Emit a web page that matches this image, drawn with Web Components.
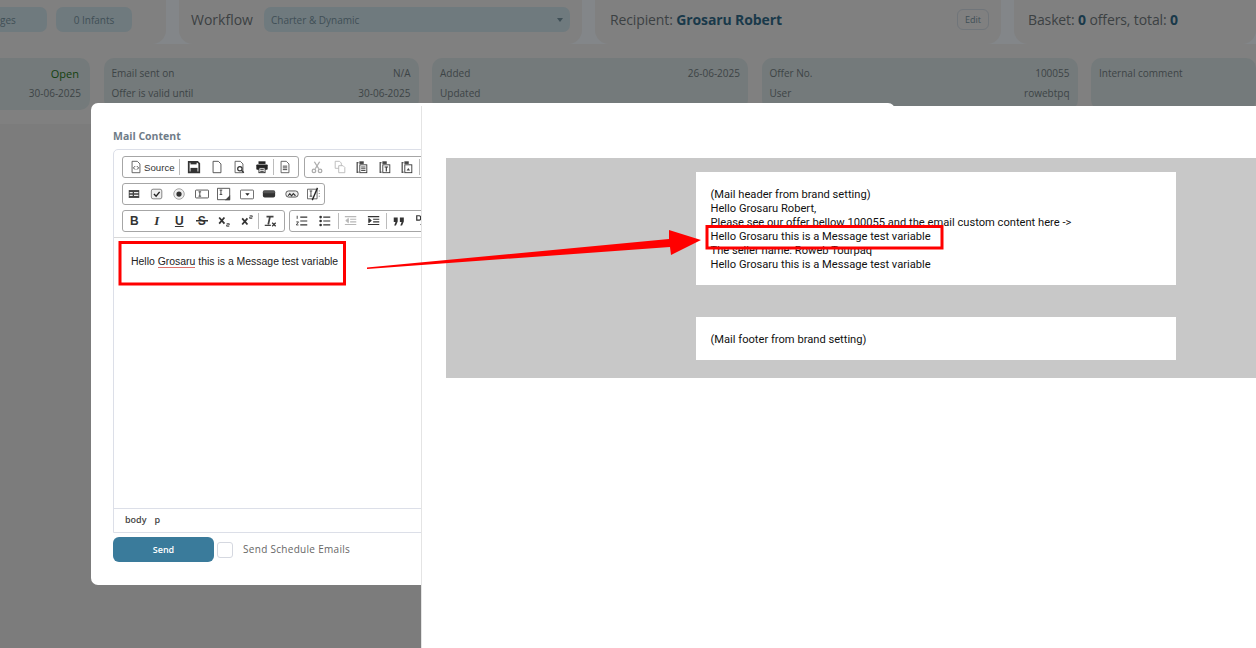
<!DOCTYPE html>
<html>
<head>
<meta charset="utf-8">
<title>Mail Content</title>
<style>
    html, body { margin: 0; height: 100%; overflow: hidden; background: #7c7c7c; }
</style>
</head>
<body>

<offer-page></offer-page>

<script>
const ICONS = {
    source: '<path d="M3.5 1.5h6l3 3v10h-9z" fill="#fff" stroke="#555"/><path d="M7 7l-2 2 2 2M9 7l2 2-2 2" fill="none" stroke="#333"/>',
    save: '<path d="M2 2h10l2 2v10H2z" fill="none" stroke="#333" stroke-width="2"/><rect x="4" y="9" width="8" height="5" fill="#333"/><rect x="4" y="2" width="7" height="3" fill="#333"/>',
    newpage: '<path d="M3.5 1.5h6l3 3v10h-9z" fill="#fff" stroke="#444"/>',
    preview: '<path d="M3.5 1.5h6l3 3v10h-9z" fill="#fff" stroke="#555"/><circle cx="9" cy="10" r="2.5" fill="#fff" stroke="#333" stroke-width="1.4"/><path d="M11 12l2.5 2.5" stroke="#333" stroke-width="1.5"/>',
    print: '<rect x="4" y="1.5" width="8" height="3" fill="#222"/><rect x="1.5" y="5" width="13" height="6" rx="1" fill="#222"/><rect x="4.5" y="9" width="7" height="5.5" fill="#fff" stroke="#222"/><path d="M6 11h4M6 13h4" stroke="#222"/>',
    template: '<path d="M3.5 1.5h6l3 3v10h-9z" fill="#fff" stroke="#555"/><path d="M5.5 7h5M5.5 9h5M5.5 11h5" stroke="#333"/>',
    cut: '<g opacity=".4" fill="none" stroke="#333" stroke-width="1.5"><path d="M5 2l5 8M11 2L6 10"/><circle cx="4.5" cy="12.5" r="2"/><circle cx="11.5" cy="12.5" r="2"/></g>',
    copy: '<g opacity=".35" fill="#fff" stroke="#333"><path d="M2.5 1.5h5l2 2v6h-7z"/><path d="M6.5 6.5h5l2 2v6h-7z"/></g>',
    paste: '<path d="M4 3H2.500v11H4" fill="none" stroke="#555" stroke-width="1.500"/><rect x="5" y="1.500" width="5" height="3" fill="#444"/><rect x="5.500" y="5.500" width="8" height="9" fill="#fff" stroke="#333"/><path d="M7 8h5M7 10h5M7 12h5" stroke="#333"/>',
    pastetext: '<path d="M4 3H2.500v11H4" fill="none" stroke="#555" stroke-width="1.500"/><rect x="5" y="1.500" width="5" height="3" fill="#444"/><rect x="5.500" y="5.500" width="8" height="9" fill="#fff" stroke="#333"/><path d="M7.500 8h4M9.500 8v5" stroke="#333" stroke-width="1.300"/>',
    pasteword: '<path d="M4 3H2.500v11H4" fill="none" stroke="#555" stroke-width="1.500"/><rect x="5" y="1.500" width="5" height="3" fill="#444"/><rect x="5.500" y="5.500" width="8" height="9" fill="#fff" stroke="#333"/><path d="M7.500 12l2-3 2 3z" fill="#444"/>',
    form: '<rect x="2" y="3.500" width="12" height="9" fill="#444"/><path d="M3 6.500h3.500M8 6.500h5M3 9.500h3.500M8 9.500h5" stroke="#eee" stroke-width="1.300"/>',
    checkbox: '<rect x="1.500" y="2.500" width="12" height="11" rx="2" fill="#eee" stroke="#777"/><path d="M4.500 8l2.500 2.500 4-5" fill="none" stroke="#222" stroke-width="1.600"/>',
    radio: '<circle cx="8" cy="8" r="6" fill="#eee" stroke="#999"/><circle cx="8" cy="8" r="3" fill="#333"/>',
    textfield: '<rect x=".5" y="3.500" width="15" height="9" rx="1" fill="#fff" stroke="#444"/><path d="M4 5.500h3M4 10.500h3M5.500 5.500v5" stroke="#333"/>',
    textarea: '<path d="M.5 1.500h14v13H.5z" fill="#fff" stroke="#444"/><path d="M3 3.500h3M3 8.500h3M4.500 3.500v5" stroke="#333"/><path d="M15 9v6H9z" fill="#444"/>',
    select: '<rect x=".5" y="3.500" width="15" height="10" rx="1" fill="#fff" stroke="#555"/><path d="M6 7h5l-2.500 3z" fill="#222"/>',
    button: '<rect x="1" y="4" width="14" height="8" rx="2" fill="#333"/><rect x="1" y="4" width="14" height="3" rx="1.500" fill="#555"/>',
    imagebutton: '<rect x="1" y="4.500" width="14" height="7" rx="3" fill="#eee" stroke="#444"/><path d="M3.500 10l2-2.500 2 2.500 2-2.500 2.500 2.500" fill="none" stroke="#333" stroke-width="1.300"/>',
    hidden: '<path d="M.5 2.500h11v11H.5z" fill="#fff" stroke="#555"/><path d="M3 4.500h3M3 10.500h3M4.500 4.500v6" stroke="#333"/><path d="M12 1L6 15" stroke="#222" stroke-width="1.500"/><path d="M14 4v1M14 7v1M14 10v1" stroke="#555"/>',
    sub: '<path d="M2.500 4l6 7M8.500 4l-6 7" stroke="#333" stroke-width="2"/><path d="M11 11h3v1.500h-3V14h3" fill="none" stroke="#444"/>',
    sup: '<path d="M2.500 5l6 7M8.500 5l-6 7" stroke="#333" stroke-width="2"/><path d="M11 2h3v1.500h-3V5h3" fill="none" stroke="#444"/>',
    removeformat: '<path d="M4 3h8M8 3l-2 9" stroke="#444" stroke-width="2"/><path d="M2 13h7" stroke="#444" stroke-width="1.500"/><path d="M10.500 10l4 4M14.500 10l-4 4" stroke="#333" stroke-width="1.400"/>',
    numlist: '<path d="M6 3.500h8M6 8h8M6 12.500h8" stroke="#333" stroke-width="1.400"/><path d="M2.500 2v3.500M1.500 9h2.500l-2.500 3.500h2.500" fill="none" stroke="#333"/>',
    bullist: '<path d="M6 3.500h8M6 8h8M6 12.500h8" stroke="#333" stroke-width="1.400"/><circle cx="3" cy="3.500" r="1.500" fill="#333"/><circle cx="3" cy="8" r="1.500" fill="#333"/><circle cx="3" cy="12.500" r="1.500" fill="#333"/>',
    outdent: '<g opacity=".35" stroke="#333"><path d="M1 3h13M7 6h7M7 9h7M1 12h13" stroke-width="1.200"/><path d="M5 5L2 7.500 5 10z" fill="#333"/></g>',
    indent: '<g stroke="#333"><path d="M1 3h13M7 6h7M7 9h7M1 12h13" stroke-width="1.200"/><path d="M2 5l3 2.500L2 10z" fill="#333"/></g>',
    quote: '<path d="M2 4h4.500v4.500L4.500 13H2.500l1.500-4H2zM9 4h4.500v4.500L11.500 13H9.500l1.500-4H9z" fill="#333"/>',
    div: '<path d="M2 2h3c2 0 2 5 0 5H2zM10 9l-3 3 3 3" fill="none" stroke="#333" stroke-width="1.400"/>'
};

class OfferChip extends HTMLElement {
    constructor() {
        super();
        this.shadow = this.attachShadow({mode: 'open'});
        this.shadow.innerHTML = `
        <style>
            :host{
                display:flex;
                align-items:center;
                justify-content:center;
                height:25px;
                background:#6f7a7e;
                border-radius:7px;
                color:#3f4f56;
                font-size:10px;
            }
        </style>
        <slot></slot>`;
    }
}

class InfoCard extends HTMLElement {
    constructor() {
        super();
        this.shadow = this.attachShadow({mode: 'open'});
        this.shadow.innerHTML = `
        <style>
            :host{
                display:grid;
                grid-template-columns:1fr auto;
                grid-auto-rows:20px;
                align-items:center;
                align-content:start;
                box-sizing:border-box;
                height:52px;
                padding:5px 8px 0;
                background:#747a7b;
                border-radius:10px;
                color:#3d4446;
                font-size:10px;
            }
        </style>
        <slot></slot>`;
    }
}

class PageBackdrop extends HTMLElement {
    constructor() {
        super();
        this.shadow = this.attachShadow({mode: 'open'});
        this.shadow.innerHTML = `
        <style>
            :host{
                display:block;
                height:124px;
                background:#808080;
                font-family:"Open Sans", sans-serif;
                overflow:hidden;
            }
            .top{
                display:grid;
                grid-template-columns:166px 403px 406px 1fr;
                column-gap:13px;
                height:44px;
                background:#838689;
            }
            .part{
                display:flex;
                align-items:flex-start;
                background:#808080;
                border-radius:0 0 14px 14px;
                color:#3c4143;
                font-size:14px;
                min-width:0;
            }
            .first{ padding-top:7px; gap:9px; border-bottom-left-radius:0; }
            .first offer-chip:first-child{ width:47px; border-radius:0 7px 7px 0; justify-content:flex-start; }
            .first offer-chip:last-child{ width:76px; }
            .workflow{ padding:7px 0 0 12px; gap:11px; }
            .workflow .label{ line-height:25px; }
            .select{
                flex:0 0 306px;
                display:flex;
                align-items:center;
                justify-content:space-between;
                height:25px;
                box-sizing:border-box;
                padding:0 7px;
                background:#6f7a7e;
                border-radius:7px;
                color:#3f4f56;
                font-size:10px;
            }
            .caret{ border:3px solid transparent; border-top:4px solid #3f4f56; border-bottom:0; }
            .recipient{ padding:7px 12px 0 15px; justify-content:space-between; }
            .recipient span, .basket{ line-height:25px; letter-spacing:-.12px; }
            .part b{ color:#19394a; font-weight:700; }
            .edit{
                margin-top:2px;
                width:32px;
                height:21px;
                box-sizing:border-box;
                display:flex;
                align-items:center;
                justify-content:center;
                border:1px solid #70757a;
                border-radius:6px;
                font-size:9px;
                color:#3f4f56;
            }
            .basket{ padding:7px 0 0 14px; }
            .cards{
                display:grid;
                grid-template-columns:90px 315px 316px 316px 1fr;
                column-gap:13.500px;
                padding-top:14px;
            }
            .cards info-card:first-child{ border-radius:0 10px 10px 0; padding-right:9px; }
            .right{ text-align:right; }
            .open{ color:#13410f; font-size:11px; padding-right:2px; }
        </style>
        <div class="top">
            <div class="part first"><offer-chip>ges</offer-chip><offer-chip>0 Infants</offer-chip></div>
            <div class="part workflow">
                <span class="label">Workflow</span>
                <div class="select"><span>Charter &amp; Dynamic</span><i class="caret"></i></div>
            </div>
            <div class="part recipient">
                <span>Recipient: <b>Grosaru Robert</b></span>
                <div class="edit">Edit</div>
            </div>
            <div class="part basket">Basket:&nbsp;<b>0</b>&nbsp;offers, total:&nbsp;<b>0</b></div>
        </div>
        <div class="cards">
            <info-card>
                <span></span><span class="right open">Open</span>
                <span></span><span class="right">30-06-2025</span>
            </info-card>
            <info-card>
                <span>Email sent on</span><span class="right">N/A</span>
                <span>Offer is valid until</span><span class="right">30-06-2025</span>
            </info-card>
            <info-card>
                <span>Added</span><span class="right">26-06-2025</span>
                <span>Updated</span><span></span>
            </info-card>
            <info-card>
                <span>Offer No.</span><span class="right">100055</span>
                <span>User</span><span class="right">rowebtpq</span>
            </info-card>
            <info-card><span>Internal comment</span></info-card>
        </div>`;
    }
}

class ToolIcon extends HTMLElement {
    constructor() {
        super();
        this.shadow = this.attachShadow({mode: 'open'});
    }

    connectedCallback() {
        const name = this.getAttribute('name');
        this.shadow.innerHTML = `
        <style>
            :host{
                display:flex;
                align-items:center;
                justify-content:center;
                flex:0 0 22.5px;
                height:20px;
                font-family:"Liberation Sans", sans-serif;
                font-size:12px;
                font-weight:700;
                color:#333;
            }
            svg{ width:14px; height:14px; display:block; }
        </style>
        ${ICONS[name] ? `<svg viewBox="0 0 16 16">${ICONS[name]}</svg>` : '<slot></slot>'}`;
    }
}

class ToolGroup extends HTMLElement {
    constructor() {
        super();
        this.shadow = this.attachShadow({mode: 'open'});
        this.shadow.innerHTML = `
        <style>
            :host{
                display:flex;
                align-items:center;
                flex:none;
                box-sizing:border-box;
                height:22px;
                border:1px solid #a6a6a6;
                border-radius:3px;
                background:#fff;
            }
            ::slotted(.sep){ width:1px; height:16px; background:#bcbcbc; flex:none; }
            ::slotted(.source){
                display:flex;
                align-items:center;
                gap:1px;
                font:9.700px "Liberation Sans", sans-serif;
                color:#333;
                padding-left:6px;
                width:52px;
                flex:none;
                box-sizing:border-box;
            }
        </style>
        <slot></slot>`;
    }
}

class MailEditor extends HTMLElement {
    constructor() {
        super();
        this.shadow = this.attachShadow({mode: 'open'});
        this.shadow.innerHTML = `
        <style>
            :host{
                display:flex;
                flex-direction:column;
                width:500px;
                height:384px;
                box-sizing:border-box;
                border:1px solid #dcdfe8;
                border-radius:5px 0 0 0;
                margin-top:6px;
            }
            .toolbar{
                display:flex;
                flex-direction:column;
                gap:5px;
                height:88px;
                box-sizing:border-box;
                padding:6px 0 0 8px;
                border-bottom:1px solid #d8d8d8;
                overflow:hidden;
            }
            .row{ display:flex; gap:5px; }
            .body{
                flex:1;
                padding:16px 0 0 17px;
                font:10.450px/16px "Liberation Sans", sans-serif;
                color:#222;
            }
            .body span{ border-bottom:1px solid #e0726c; }
            .status{
                display:flex;
                gap:8px;
                align-items:center;
                height:24px;
                box-sizing:border-box;
                padding:0 0 2px 11px;
                border-top:1px solid #dcdfe8;
                font:600 9px "Open Sans", sans-serif;
                color:#444;
            }
            .stub{ height:22px; }
            .ital{ font-family:"Liberation Serif", serif; font-style:italic; font-size:13px; }
            .strike{ background:linear-gradient(#333,#333) center/12px 1.500px no-repeat; }
        </style>
        <div class="toolbar">
            <div class="row">
                <tool-group style="width:177px">
                    <div class="source"><tool-icon name="source" style="flex-basis:14px"></tool-icon>Source</div>
                    <i class="sep" style="margin:0 3px 0 4px"></i>
                    <tool-icon name="save"></tool-icon>
                    <tool-icon name="newpage"></tool-icon>
                    <tool-icon name="preview"></tool-icon>
                    <tool-icon name="print"></tool-icon>
                    <i class="sep"></i>
                    <tool-icon name="template"></tool-icon>
                </tool-group>
                <tool-group style="width:200px;padding-left:1px">
                    <tool-icon name="cut"></tool-icon>
                    <tool-icon name="copy"></tool-icon>
                    <tool-icon name="paste"></tool-icon>
                    <tool-icon name="pastetext"></tool-icon>
                    <tool-icon name="pasteword"></tool-icon>
                    <i class="sep"></i>
                </tool-group>
            </div>
            <div class="row">
                <tool-group style="width:203px">
                    <tool-icon name="form"></tool-icon>
                    <tool-icon name="checkbox"></tool-icon>
                    <tool-icon name="radio"></tool-icon>
                    <tool-icon name="textfield"></tool-icon>
                    <tool-icon name="textarea"></tool-icon>
                    <tool-icon name="select"></tool-icon>
                    <tool-icon name="button"></tool-icon>
                    <tool-icon name="imagebutton"></tool-icon>
                    <tool-icon name="hidden"></tool-icon>
                </tool-group>
            </div>
            <div class="row" style="gap:4px">
                <tool-group style="width:163px">
                    <tool-icon>B</tool-icon>
                    <tool-icon class="ital">I</tool-icon>
                    <tool-icon style="text-decoration:underline">U</tool-icon>
                    <tool-icon class="strike">S</tool-icon>
                    <tool-icon name="sub"></tool-icon>
                    <tool-icon name="sup"></tool-icon>
                    <i class="sep"></i>
                    <tool-icon name="removeformat"></tool-icon>
                </tool-group>
                <tool-group style="width:200px;padding-left:1px">
                    <tool-icon name="numlist"></tool-icon>
                    <tool-icon name="bullist"></tool-icon>
                    <i class="sep" style="margin:0 1.500px"></i>
                    <tool-icon name="outdent"></tool-icon>
                    <tool-icon name="indent"></tool-icon>
                    <i class="sep" style="margin:0 1px"></i>
                    <tool-icon name="quote"></tool-icon>
                    <tool-icon name="div"></tool-icon>
                </tool-group>
            </div>
            <div class="row">
                <tool-group class="stub" style="width:69px"></tool-group>
                <tool-group class="stub" style="width:181px"></tool-group>
            </div>
        </div>
        <div class="body">Hello <span>Grosaru</span> this is a Message test variable</div>
        <div class="status"><span>body</span><span>p</span></div>`;
    }
}

class MailModal extends HTMLElement {
    constructor() {
        super();
        this.shadow = this.attachShadow({mode: 'open'});
        this.shadow.innerHTML = `
        <style>
            :host{
                position:absolute;
                left:91px;
                top:103px;
                width:804px;
                height:482px;
                box-sizing:border-box;
                padding:26px 0 0 22px;
                background:#fff;
                border-radius:7px;
                font-family:"Open Sans", sans-serif;
            }
            h3{
                margin:0;
                height:14px;
                font-size:10.500px;
                line-height:14px;
                font-weight:700;
                color:#6f7c88;
            }
            .actions{
                display:flex;
                align-items:center;
                margin-top:4px;
            }
            button{
                width:101px;
                height:25px;
                padding:0;
                border:0;
                border-radius:6px;
                background:#3a7b9b;
                color:#fff;
                font:600 9px "Open Sans", sans-serif;
            }
            .check{
                width:16px;
                height:16px;
                box-sizing:border-box;
                margin:0 10px 0 3px;
                border:1px solid #d5d8e0;
                border-radius:3px;
            }
            label{ font-size:10px; letter-spacing:.3px; color:#666; padding-bottom:2px; }
        </style>
        <h3>Mail Content</h3>
        <mail-editor></mail-editor>
        <div class="actions">
            <button>Send</button>
            <div class="check"></div>
            <label>Send Schedule Emails</label>
        </div>`;
    }
}

class MailPreview extends HTMLElement {
    constructor() {
        super();
        this.shadow = this.attachShadow({mode: 'open'});
        this.shadow.innerHTML = `
        <style>
            :host{
                position:absolute;
                left:421px;
                top:106px;
                right:0;
                bottom:0;
                box-sizing:border-box;
                padding:52px 0 0 24px;
                background:#fff;
                border-left:1px solid #e4e4e4;
                font:11.150px/14px Roboto, sans-serif;
                color:#111;
            }
            .band{
                display:flex;
                flex-direction:column;
                align-items:flex-start;
                gap:32px;
                height:220px;
                box-sizing:border-box;
                padding:14px 0 0 250px;
                background:#c8c8c8;
            }
            .box{
                width:480px;
                box-sizing:border-box;
                padding:15px 15px 14px 14.500px;
                background:#fff;
                position:relative;
            }
            .box span{ position:relative; top:1px; }
        </style>
        <div class="band">
            <div class="box"><span>
                (Mail header from brand setting)<br>
                Hello Grosaru Robert,<br>
                Please see our offer bellow 100055 and the email custom content here -&gt;<br>
                Hello Grosaru this is a Message test variable<br>
                The seller name: Roweb Tourpaq<br>
                Hello Grosaru this is a Message test variable
            </span></div>
            <div class="box"><span>(Mail footer from brand setting)</span></div>
        </div>`;
    }
}

class RedMarks extends HTMLElement {
    constructor() {
        super();
        this.shadow = this.attachShadow({mode: 'open'});
        this.shadow.innerHTML = `
        <style>
            :host{ position:absolute; inset:0; pointer-events:none; }
            svg{ display:block; width:100%; height:100%; }
        </style>
        <svg viewBox="0 0 1256 648">
            <rect x="120" y="242.500" width="224.500" height="41.500" fill="none" stroke="#f00" stroke-width="3"/>
            <rect x="707" y="226.500" width="235" height="21.500" fill="none" stroke="#f00" stroke-width="3"/>
            <polygon fill="#f00" points="367,267.500 669,239 669,230 701,240 671,255 670,247 367,269"/>
        </svg>`;
    }
}

class OfferPage extends HTMLElement {
    constructor() {
        super();
        this.shadow = this.attachShadow({mode: 'open'});
        this.shadow.innerHTML = `
        <style>
            :host{ display:block; position:relative; width:1256px; height:648px; overflow:hidden; }
        </style>
        <page-backdrop></page-backdrop>
        <mail-modal></mail-modal>
        <mail-preview></mail-preview>
        <red-marks></red-marks>`;
    }
}

customElements.define('offer-chip', OfferChip);
customElements.define('info-card', InfoCard);
customElements.define('page-backdrop', PageBackdrop);
customElements.define('tool-icon', ToolIcon);
customElements.define('tool-group', ToolGroup);
customElements.define('mail-editor', MailEditor);
customElements.define('mail-modal', MailModal);
customElements.define('mail-preview', MailPreview);
customElements.define('red-marks', RedMarks);
customElements.define('offer-page', OfferPage);
</script>
</body>
</html>
